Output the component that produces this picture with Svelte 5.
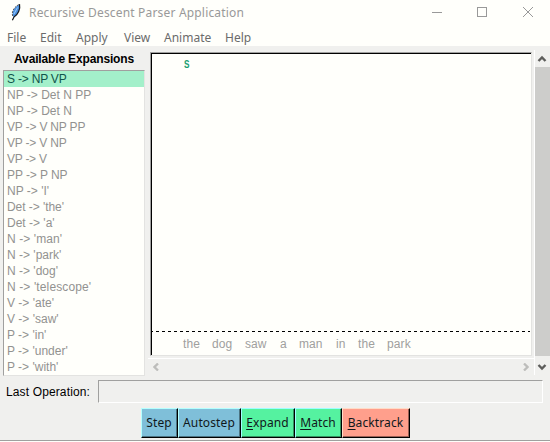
<script>
  const menus = [
    ['File', 33], ['Edit', 36], ['Apply', 48], ['View', 40], ['Animate', 61], ['Help', 40]
  ];
  // Each rule carries its tracking in pixels
  const rules = [
    ['S -> NP VP', -0.2], ['NP -> Det N PP', 0], ['NP -> Det N', 0], ['VP -> V NP PP', -0.18],
    ['VP -> V NP', -0.2], ['VP -> V', -0.25], ['PP -> P NP', -0.08], ["NP -> 'I'", 0],
    ["Det -> 'the'", -0.06], ["Det -> 'a'", 0], ["N -> 'man'", 0.1], ["N -> 'park'", 0],
    ["N -> 'dog'", 0], ["N -> 'telescope'", 0.12], ["V -> 'ate'", 0], ["V -> 'saw'", 0],
    ["P -> 'in'", 0], ["P -> 'under'", 0], ["P -> 'with'", 0]
  ];
  const words = [['the', 29], ['dog', 33], ['saw', 35], ['a', 19], ['man', 37], ['in', 22], ['the', 29], ['park', 30]];
  const buttons = [
    { key: '', rest: 'Step', tone: 'blue', width: 37 },
    { key: '', rest: 'Autostep', tone: 'blue', width: 63 },
    { key: 'E', rest: 'xpand', tone: 'green', width: 54 },
    { key: 'M', rest: 'atch', tone: 'green', width: 47 },
    { key: 'B', rest: 'acktrack', tone: 'red', width: 68 }
  ];
</script>

<div class="window">
  <header>
    <svg class="feather" width="14" height="18" viewBox="0 0 14 18">
      <path d="M4 13.5C2.5 9 5 4 10.5 1.5C11.5 6 9 11.5 5 13.8Z" fill="#4c90e0" />
      <path d="M3.6 13C2.4 8.5 5 4 10.3 1.3" fill="none" stroke="#55585c" stroke-width="1" stroke-dasharray="2 1" />
      <path d="M10.5 1.2C11.6 6 9 11.8 5 14L3.4 17.2" fill="none" stroke="#14161a" stroke-width="1.2" />
      <path d="M8.5 4.5L5 11" stroke="#9ccbf6" stroke-width="1" />
    </svg>
    <span class="title">Recursive Descent Parser Application</span>
    <svg class="controls" width="120" height="24" viewBox="0 0 120 24" fill="none" stroke="#999" shape-rendering="crispEdges">
      <path d="M2 12.5H12" />
      <rect x="47.5" y="7.5" width="9" height="9" />
      <path d="M93 7L103 17M103 7L93 17" shape-rendering="auto" />
    </svg>
  </header>
  <nav>
    {#each menus as [name, width]}<span style:width="{width}px">{name}</span>{/each}
  </nav>
  <main>
    <aside>
      <h2>Available Expansions</h2>
      <ul>
        {#each rules as [rule, tracking], i}
          <li class:selected={i === 0} style:letter-spacing="{tracking}px">{rule}</li>
        {/each}
      </ul>
    </aside>
    <section>
      <div class="canvas">
        <div class="tree"><span>S</span></div>
        <svg class="dash" width="379" height="1"><path d="M0 .5H379" stroke="#000" stroke-dasharray="3 3" stroke-dashoffset="1" shape-rendering="crispEdges" /></svg>
        <div class="words">
          {#each words as [word, width]}<span style:width="{width}px">{word}</span>{/each}
        </div>
      </div>
      <div class="hscroll">
        <svg width="6" height="8" viewBox="0 0 6 8"><path d="M5 .5L1.5 4L5 7.5" /></svg>
        <svg width="6" height="8" viewBox="0 0 6 8"><path d="M1 .5L4.5 4L1 7.5" /></svg>
      </div>
    </section>
    <div class="vscroll">
      <svg width="15" height="17" viewBox="0 0 15 17"><path d="M3.5 11L7 7.5L10.5 11" /></svg>
      <div class="thumb"></div>
      <svg width="15" height="18" viewBox="0 0 15 18"><path d="M3.5 9L7 12.5L10.5 9" /></svg>
    </div>
  </main>
  <div class="operation"><span>Last Operation:</span><div class="field"></div></div>
  <footer>
    {#each buttons as b}
      <button class={b.tone} style:width="{b.width}px"><span>{#if b.key}<u>{b.key}</u>{/if}{b.rest}</span></button>
    {/each}
  </footer>
</div>

<style>
  .window {
    box-sizing: border-box;
    width: 550px;
    height: 442px;
    background: #f0f0ee;
    font: 12px "Liberation Sans", Arial, sans-serif;
    overflow: hidden;
    border-bottom: 1px solid #fefefa;
    box-shadow: inset 0 -1px #a0a09f;
  }
  svg { display: block; flex: none; }
  header, nav { background: #fffffb; display: flex; font-family: "Noto Sans", sans-serif; }
  header { height: 26px; color: #999; }
  .feather { margin: 3px 0 0 9px; }
  .title { margin-left: 6px; line-height: 26px; width: 401px; white-space: nowrap; font-size: 12px; letter-spacing: 0.18px; }
  nav { height: 20px; padding-left: 7px; color: #6b6b6b; line-height: 24px; }
  nav span { white-space: nowrap; flex: none; }
  main { display: flex; height: 329px; }
  aside { width: 142px; margin-left: 3px; flex: none; }
  h2 { margin: 0; height: 24px; line-height: 26px; text-align: center; font-size: 12px; letter-spacing: -0.15px; }
  ul {
    margin: 0; padding: 0; list-style: none; height: 304px; background: #fffffb;
    border: 1px solid #a0a09f; border-right-color: #e3e3e1; border-bottom-color: #e3e3e1;
  }
  li { height: 16px; line-height: 16px; padding-left: 3px; color: #929290; white-space: pre; }
  li.selected { background: #a3f0ca; color: #10544b; }
  section { width: 386px; margin-left: 3px; flex: none; padding-top: 6px; }
  .canvas {
    box-sizing: border-box; margin-left: 2px; width: 382px; height: 304px; background: #fffffb;
    border: 1px solid #a0a09f; border-right-color: #e3e3e1; border-bottom-color: #e3e3e1;
    box-shadow: inset 1px 1px #000;
  }
  .tree { height: 278px; padding-left: 33px; line-height: 23px; font-weight: bold; font-size: 10.5px; color: #18a070; }
  .tree span { display: inline-block; transform: scaleX(0.78); transform-origin: left; }
  .words { display: flex; padding-left: 32px; line-height: 24px; color: #a0a09e; }
  .words span { flex: none; letter-spacing: 0.1px; }
  .hscroll {
    box-sizing: border-box; height: 19px; margin-top: 2px; border-top: 1px solid #fff;
    display: flex; justify-content: space-between; padding: 4px 5px 0;
  }
  .hscroll path { fill: none; stroke: #bdbdbb; stroke-width: 2.3; }
  .vscroll { width: 15px; margin-top: 4px; border-left: 1px solid #fff; height: 325px; }
  .vscroll path { fill: none; stroke: #5d5d5b; stroke-width: 2.4; }
  .thumb { height: 289px; background: #cdcdcb; }
  .operation { display: flex; margin: 5px 0 0 6px; height: 23px; line-height: 24px; }
  .operation span { width: 92px; letter-spacing: 0.13px; }
  .field { box-sizing: border-box; width: 445px; border: 1px solid #a0a09f; border-right-color: #fff; border-bottom-color: #fff; }
  footer { display: flex; padding: 5px 0 0 141px; }
  button {
    box-sizing: border-box; height: 30px; padding: 0; margin: 0; border: 1px solid; border-right-color: #000;
    border-bottom-color: #000; border-radius: 0; color: #10181b; font: 12px "Noto Sans", sans-serif; white-space: nowrap;
    letter-spacing: 0.12px;
  }
  button span { display: block; line-height: 26px; margin-left: -1px; }
  u { text-underline-offset: 2px; }
  .blue { background: #7fbfd9; border-top-color: #b5ffff; border-left-color: #b5ffff; box-shadow: inset -1px -1px #4c7382; }
  .green { background: #55f2a0; border-top-color: #9fffff; border-left-color: #9fffff; box-shadow: inset -1px -1px #339160; }
  .red { background: #ff9f8c; border-top-color: #ffdcc8; border-left-color: #ffdcc8; box-shadow: inset -1px -1px #995f54; }
</style>
